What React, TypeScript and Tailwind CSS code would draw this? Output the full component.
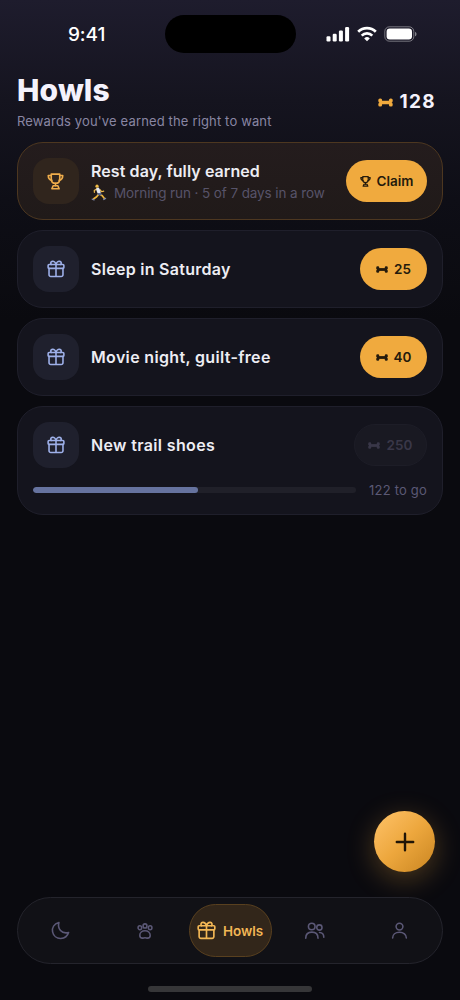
import React, { useState } from 'react';
import clsx from 'clsx';

type Reward = {
  id: string;
  title: string;
  cost: number;
};

const balance = 128;

const rewards: Reward[] = [
  { id: 'sleep', title: 'Sleep in Saturday', cost: 25 },
  { id: 'movie', title: 'Movie night, guilt-free', cost: 40 },
  { id: 'shoes', title: 'New trail shoes', cost: 250 },
];

// fine tuning so each title keeps its own width
const titleTracking: Record<string, string> = {
  sleep: 'tracking-[0.28px]',
  movie: 'tracking-[0.34px]',
  shoes: 'tracking-[0.35px]',
};

type IconProps = { className?: string };

const stroke = {
  viewBox: '0 0 24 24',
  fill: 'none',
  stroke: 'currentColor',
  strokeLinecap: 'round' as const,
  strokeLinejoin: 'round' as const,
};

const GiftIcon = ({ className }: IconProps) => (
  <svg {...stroke} strokeWidth={2.1} className={className}>
    <rect x="1.5" y="6" width="21" height="5.2" rx="1.3" />
    <path d="M2.7 11v8.7a2.3 2.3 0 0 0 2.3 2.3h14a2.3 2.3 0 0 0 2.3-2.3V11M12 6v16" />
    <path d="M12 5.8C11 2.9 9.4 1.6 7.3 1.8 4.9 2.1 4.3 4.5 5.8 6M12 5.8c1-2.9 2.6-4.2 4.7-4C19.1 2.1 19.7 4.5 18.2 6" />
  </svg>
);

const TrophyIcon = ({ className, strokeWidth = 2.3 }: IconProps & { strokeWidth?: number }) => (
  <svg {...stroke} strokeWidth={strokeWidth} className={className}>
    <path d="M6 1.5h12v6.800c0 4-2.400 6.200-6 6.200s-6-2.200-6-6.200z" />
    <path d="M6 3.5H1.800c0 4 1.200 6.100 5 6.900M18 3.500h4.200c0 4-1.200 6.100-5 6.900M12 14.500v3.500" />
    <path d="M8.700 18h6.600l1.800 4.300H6.900z" />
  </svg>
);

const BoneIcon = ({ className }: IconProps) => (
  <svg viewBox="0 0 24 14" fill="currentColor" className={className}>
    <rect x="3" y="4.2" width="18" height="5.6" />
    <rect x="0.5" y="0.5" width="6" height="6.5" rx="2.6" />
    <rect x="0.5" y="7" width="6" height="6.5" rx="2.6" />
    <rect x="17.5" y="0.5" width="6" height="6.5" rx="2.6" />
    <rect x="17.5" y="7" width="6" height="6.5" rx="2.6" />
    <rect x="2" y="3" width="4" height="8" />
    <rect x="18" y="3" width="4" height="8" />
  </svg>
);

const MoonIcon = ({ className }: IconProps) => (
  <svg {...stroke} strokeWidth={2} className={className}>
    <path d="M10 1.8C3.8 3.7 1 8.6 2 13.8c1 5 5.3 8.4 10.4 8.2 4.8-.2 8.5-3 9.8-7.4-4 1-7.8.2-10.2-2.6C9.5 9.2 9 5.6 10 1.8z" />
  </svg>
);

const PawIcon = ({ className }: IconProps) => (
  <svg {...stroke} strokeWidth={2.3} className={className}>
    <ellipse cx="4.3" cy="7" rx="2.7" ry="3" />
    <ellipse cx="12" cy="4.4" rx="2.9" ry="3.1" />
    <ellipse cx="19.7" cy="7" rx="2.7" ry="3" />
    <path d="M12 11.600c-4.600 0-7.800 2.900-7.800 6.600 0 2.900 1.700 4.500 4.100 4.500 1.300 0 2.300-.5 3.700-.5s2.400.5 3.700.5c2.400 0 4.100-1.600 4.100-4.500 0-3.700-3.200-6.600-7.800-6.600z" />
  </svg>
);

const PeopleIcon = ({ className }: IconProps) => (
  <svg viewBox="0 0 28 24" fill="none" stroke="currentColor" strokeWidth={2.1} strokeLinecap="round" className={className}>
    <circle cx="10.3" cy="6" r="4.4" />
    <path d="M2.300 21.500c0-5 3.300-8 8.200-8s8.200 3 8.200 8" />
    <circle cx="20.5" cy="7.300" r="3.5" />
    <path d="M20.700 14c3.500.1 5.700 2.700 5.700 6.300" />
  </svg>
);

const PersonIcon = ({ className }: IconProps) => (
  <svg {...stroke} strokeWidth={2.2} className={className}>
    <circle cx="12" cy="6.5" r="4.8" />
    <path d="M2.3 22.700c0-4.900 4-8.200 9.700-8.200s9.700 3.300 9.700 8.200" />
  </svg>
);

const RunnerIcon = ({ className }: IconProps) => (
  <svg viewBox="0 0 16 18" fill="none" strokeLinecap="round" strokeLinejoin="round" className={className}>
    <path d="M8 10.500 5.500 13.500 2.500 15.600" stroke="#ecb43e" strokeWidth="1.800" />
    <path d="M9 10.800l2.500 1.700 2.200 2.800" stroke="#ecb43e" strokeWidth="1.800" />
    <path d="M5.500 5.200 3 6.900l.1 1.900M9 6l1.700 2.200 2.300-.6" stroke="#edb849" strokeWidth="1.300" />
    <path d="M6.800 5.600 8 8.800" stroke="#e4e8f2" strokeWidth="3.600" />
    <path d="M7.500 10.700l2.300.2" stroke="#59658c" strokeWidth="2.200" />
    <path d="M.8 16l2 .9M13 16.400l2-1.200" stroke="#7c86aa" strokeWidth="1.300" />
    <circle cx="5.900" cy="2.300" r="1.700" fill="#f0bc47" />
  </svg>
);

const StatusBar = () => (
  <div className="grid h-[68px] grid-cols-[164.5px_131px_164.5px]">
    <div className="pt-[23px] pl-[68px] text-[19px] leading-6 font-medium tracking-[-0.1px] text-white">9:41</div>
    <div className="mt-[15px] h-[38px] rounded-full bg-black" />
    <div className="flex h-[42px] items-end gap-[7px] pl-[30px] text-white">
      <svg viewBox="0 0 24 16" className="h-4 w-6" fill="currentColor">
        <rect x="0.5" y="10.3" width="4" height="5.2" rx="1.2" />
        <rect x="6.7" y="7.7" width="4" height="7.8" rx="1.2" />
        <rect x="12.9" y="4.5" width="4" height="11" rx="1.2" />
        <rect x="19.1" y="1" width="4" height="14.5" rx="1.2" />
      </svg>
      <svg viewBox="0 0 20 16" className="h-4 w-5" fill="none" stroke="currentColor" strokeWidth="2.7">
        <path d="M1.2 5.800a12.500 12.500 0 0 1 17.600 0" />
        <path d="M4.700 9.600a7.500 7.500 0 0 1 10.600 0" />
        <path d="M10 15.300l-2.800-2.900a4 4 0 0 1 5.600 0z" fill="currentColor" stroke="none" />
      </svg>
      <svg viewBox="0 0 33 16" className="h-4 w-[33px]">
        <rect x=".8" y=".8" width="29" height="14.4" rx="4.6" fill="none" stroke="#fff" strokeOpacity=".4" />
        <rect x="2.6" y="2.6" width="25.4" height="10.8" rx="3.2" fill="currentColor" />
        <path d="M31 5.700c2 .8 2 3.800 0 4.600z" fill="#fff" opacity=".45" />
      </svg>
    </div>
  </div>
);

const CardIcon = ({ children, gold = false }: { children: React.ReactNode; gold?: boolean }) => (
  <div
    className={clsx(
      'flex size-[46px] shrink-0 items-center justify-center rounded-[16px]',
      gold ? 'bg-[#30251d] text-[#efad4b]' : 'bg-[#1f202d] text-[#9eb0e9]',
    )}
  >
    {children}
  </div>
);

const RewardCard = ({ reward }: { reward: Reward }) => {
  const affordable = balance >= reward.cost;

  return (
    <div className={clsx('rounded-[26px] border border-[#1f1f2b] bg-[#14141d] p-[15px]', affordable ? 'h-[78px]' : 'h-[109px]')}>
      <div className="flex items-center">
        <CardIcon>
          <GiftIcon className="-mr-px -ml-[2px] size-[18px]" />
        </CardIcon>
        <h2 className={clsx('ml-3 flex-1 text-[16px] leading-6 font-semibold whitespace-nowrap text-[#ededf3]', titleTracking[reward.id])}>
          {reward.title}
        </h2>
        <button
          className={clsx(
            'flex h-[42px] items-center justify-center gap-[6px] rounded-full text-[13.5px] font-semibold',
            affordable
              ? 'w-[67px] bg-[#f0aa3e] text-[#241a0c]'
              : 'w-[73px] border border-[#1d1d27] bg-[#191922] tracking-[0.1px] text-[#393748]',
          )}
          disabled={!affordable}
        >
          <BoneIcon className="h-[7px] w-3" />
          {reward.cost}
        </button>
      </div>

      {!affordable && (
        <div className="mt-3 flex h-5 items-center gap-3">
          <div className="h-[5.5px] flex-1 overflow-hidden rounded-full bg-[#202029]">
            <div className="h-full rounded-full bg-[#66739f]" style={{ width: `${(balance / reward.cost) * 100}%` }} />
          </div>
          <span className="w-[59px] pt-px text-right text-[13px] tracking-[0.2px] whitespace-nowrap text-[#5b5975]">
            {reward.cost - balance} to go
          </span>
        </div>
      )}
    </div>
  );
};

const tabs = [
  { name: 'Night', icon: <MoonIcon className="size-[19px]" /> },
  { name: 'Pack', icon: <PawIcon className="size-[16px]" /> },
  { name: 'Howls', icon: <GiftIcon className="size-[19px]" /> },
  { name: 'Friends', icon: <PeopleIcon className="h-[18px] w-[21px]" /> },
  { name: 'Profile', icon: <PersonIcon className="size-[17px]" /> },
];

const App: React.FC = () => {
  const [activeTab, setActiveTab] = useState('Howls');

  return (
    <div className="flex h-[1000px] w-[460px] flex-col overflow-hidden bg-[linear-gradient(180deg,#1e1c2d_0px,#15141f_100px,#0e0e16_200px,#0a0a0f_320px,#0a0a0f_1000px)] font-['Inter',sans-serif]">
      <StatusBar />

      <header className="flex h-[74px] justify-between pr-6 pl-[17px]">
        <div>
          <h1 className="mt-[2px] text-[30px] leading-10 font-extrabold tracking-[0.1px] text-[#f4f2fc]">Howls</h1>
          <p className="mt-px text-[13px] leading-5 tracking-[0.15px] whitespace-nowrap text-[#8986a3]">Rewards you've earned the right to want</p>
        </div>
        <div className="flex h-[69px] items-center gap-[7px] text-[19px] font-bold tracking-[1.3px] text-[#f4f2fc]">
          <BoneIcon className="h-[9px] w-[15px] text-[#f0aa3e]" />
          {balance}
        </div>
      </header>

      <main className="flex flex-col gap-[10px] px-[17px]">
        <div className="flex h-[78px] items-center rounded-[26px] border border-[#4d3720] bg-linear-to-b from-[#241c1d] to-[#201a19] px-[15px]">
          <CardIcon gold>
            <TrophyIcon className="-mr-px -ml-[2px] size-[17px]" />
          </CardIcon>
          <div className="ml-3 flex-1 pt-px">
            <h2 className="text-[16px] leading-[22px] font-semibold tracking-[0.08px] whitespace-nowrap text-[#ededf3]">Rest day, fully earned</h2>
            <p className="flex items-center gap-[7px] text-[13.5px] leading-[22px] tracking-[-0.1px] whitespace-nowrap text-[#575369]">
              <RunnerIcon className="h-[17px] w-4" />
              Morning run · 5 of 7 days in a row
            </p>
          </div>
          <button className="flex h-[42px] w-[81px] shrink-0 items-center justify-center gap-[6px] rounded-full bg-[#f0aa3e] text-[13.5px] font-semibold text-[#241a0c]">
            <TrophyIcon className="size-[11px]" strokeWidth={2.700} />
            Claim
          </button>
        </div>

        {rewards.map((reward) => (
          <RewardCard key={reward.id} reward={reward} />
        ))}
      </main>

      <div className="mt-auto mr-[25px] mb-[25px] flex justify-end">
        <button
          aria-label="Add reward"
          className="flex size-[61px] items-center justify-center rounded-full bg-linear-135 from-[#ffc368] via-[#eda73d] to-[#c98520] text-[#201507] shadow-[0_7px_28px_rgba(240,170,62,0.3)]"
        >
          <svg {...stroke} strokeWidth={2.4} className="size-6">
            <path d="M12 3.800v16.400M3.800 12h16.400" />
          </svg>
        </button>
      </div>

      <nav className="mx-[17px] grid h-[67px] shrink-0 grid-cols-5 items-center rounded-full border border-[#24242c] bg-[#111116]">
        {tabs.map((tab) => (
          <button
            key={tab.name}
            aria-label={tab.name}
            onClick={() => setActiveTab(tab.name)}
            className={clsx(
              'flex h-[53px] items-center justify-center',
              activeTab === tab.name
                ? 'ml-px w-[83px] gap-[7px] rounded-full border border-[#59401f] bg-[#32261a] text-[13.5px] font-semibold text-[#f3b755]'
                : 'text-[#5b5876]',
            )}
          >
            {tab.icon}
            {activeTab === tab.name && <span className="pt-px">{tab.name}</span>}
          </button>
        ))}
      </nav>

      <div className="flex h-9 shrink-0 justify-center pt-[22px]">
        <div className="h-[5.5px] w-[164px] rounded-full bg-[#363638]" />
      </div>
    </div>
  );
};

export default App;
